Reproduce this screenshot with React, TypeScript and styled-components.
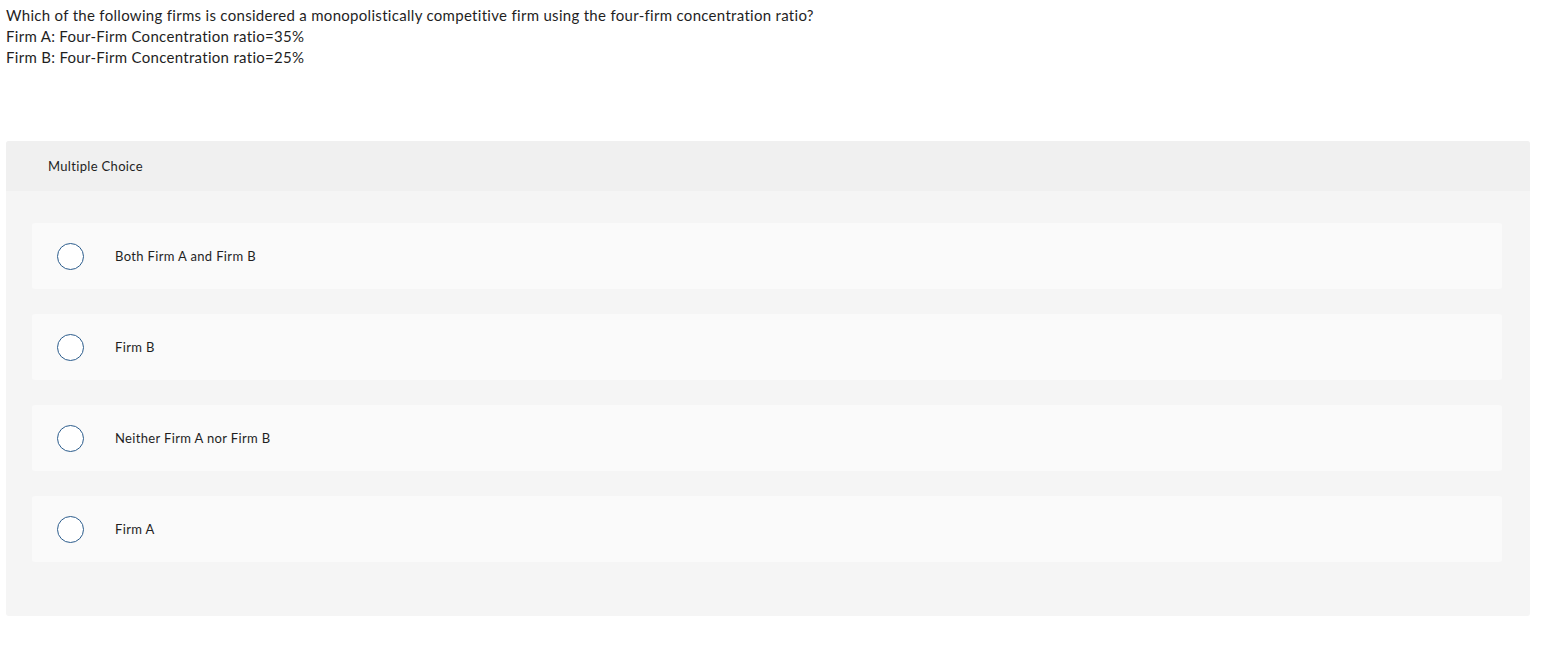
import React from "react";
import styled, { createGlobalStyle } from "styled-components";

const GlobalStyle = createGlobalStyle`
  html, body {
    margin: 0;
    padding: 0;
    background: #ffffff;
  }
  body {
    font-family: Lato, "Open Sans", "Liberation Sans", sans-serif;
    font-variant-ligatures: none;
    color: #212121;
  }
`;

const Page = styled.div`
  padding: 5px 29px 32px 6px;
`;

const Prompt = styled.div`
  font-size: 15px;
  line-height: 21px;
  letter-spacing: 0.3px;
  color: #1f1f1f;
`;

const Card = styled.section`
  margin-top: 73px;
  background: #f5f5f5;
  border-radius: 3px;
  overflow: hidden;
`;

const CardHeader = styled.div`
  height: 50px;
  display: flex;
  align-items: center;
  padding-left: 42px;
  background: #f0f0f0;
  font-size: 13px;
  letter-spacing: 0.33px;
  color: #1f1f1f;
`;

const Options = styled.div`
  display: flex;
  flex-direction: column;
  gap: 25px;
  padding: 32px 28px 54px 26px;
`;

const Option = styled.label`
  height: 66px;
  display: flex;
  align-items: center;
  padding-left: 25px;
  background: #fafafa;
  border-radius: 3px;
  font-size: 13px;
  letter-spacing: 0.35px;
  color: #1f1f1f;
  cursor: pointer;
`;

const Radio = styled.span`
  box-sizing: border-box;
  width: 27px;
  height: 27px;
  flex: none;
  border: 1.4px solid #2b5c8c;
  border-radius: 50%;
  background: #ffffff;
  margin-right: 31px;
`;

const choices = [
  "Both Firm A and Firm B",
  "Firm B",
  "Neither Firm A nor Firm B",
  "Firm A",
];

const App: React.FC = () => (
  <>
    <GlobalStyle />
    <Page>
      <Prompt>
        Which of the following firms is considered a monopolistically competitive firm using the four-firm concentration ratio?
        <br />
        Firm A: Four-Firm Concentration ratio=35%
        <br />
        Firm B: Four-Firm Concentration ratio=25%
      </Prompt>
      <Card>
        <CardHeader>Multiple Choice</CardHeader>
        <Options>
          {choices.map(c => (
            <Option key={c}>
              <Radio />
              {c}
            </Option>
          ))}
        </Options>
      </Card>
    </Page>
  </>
);

export default App;
